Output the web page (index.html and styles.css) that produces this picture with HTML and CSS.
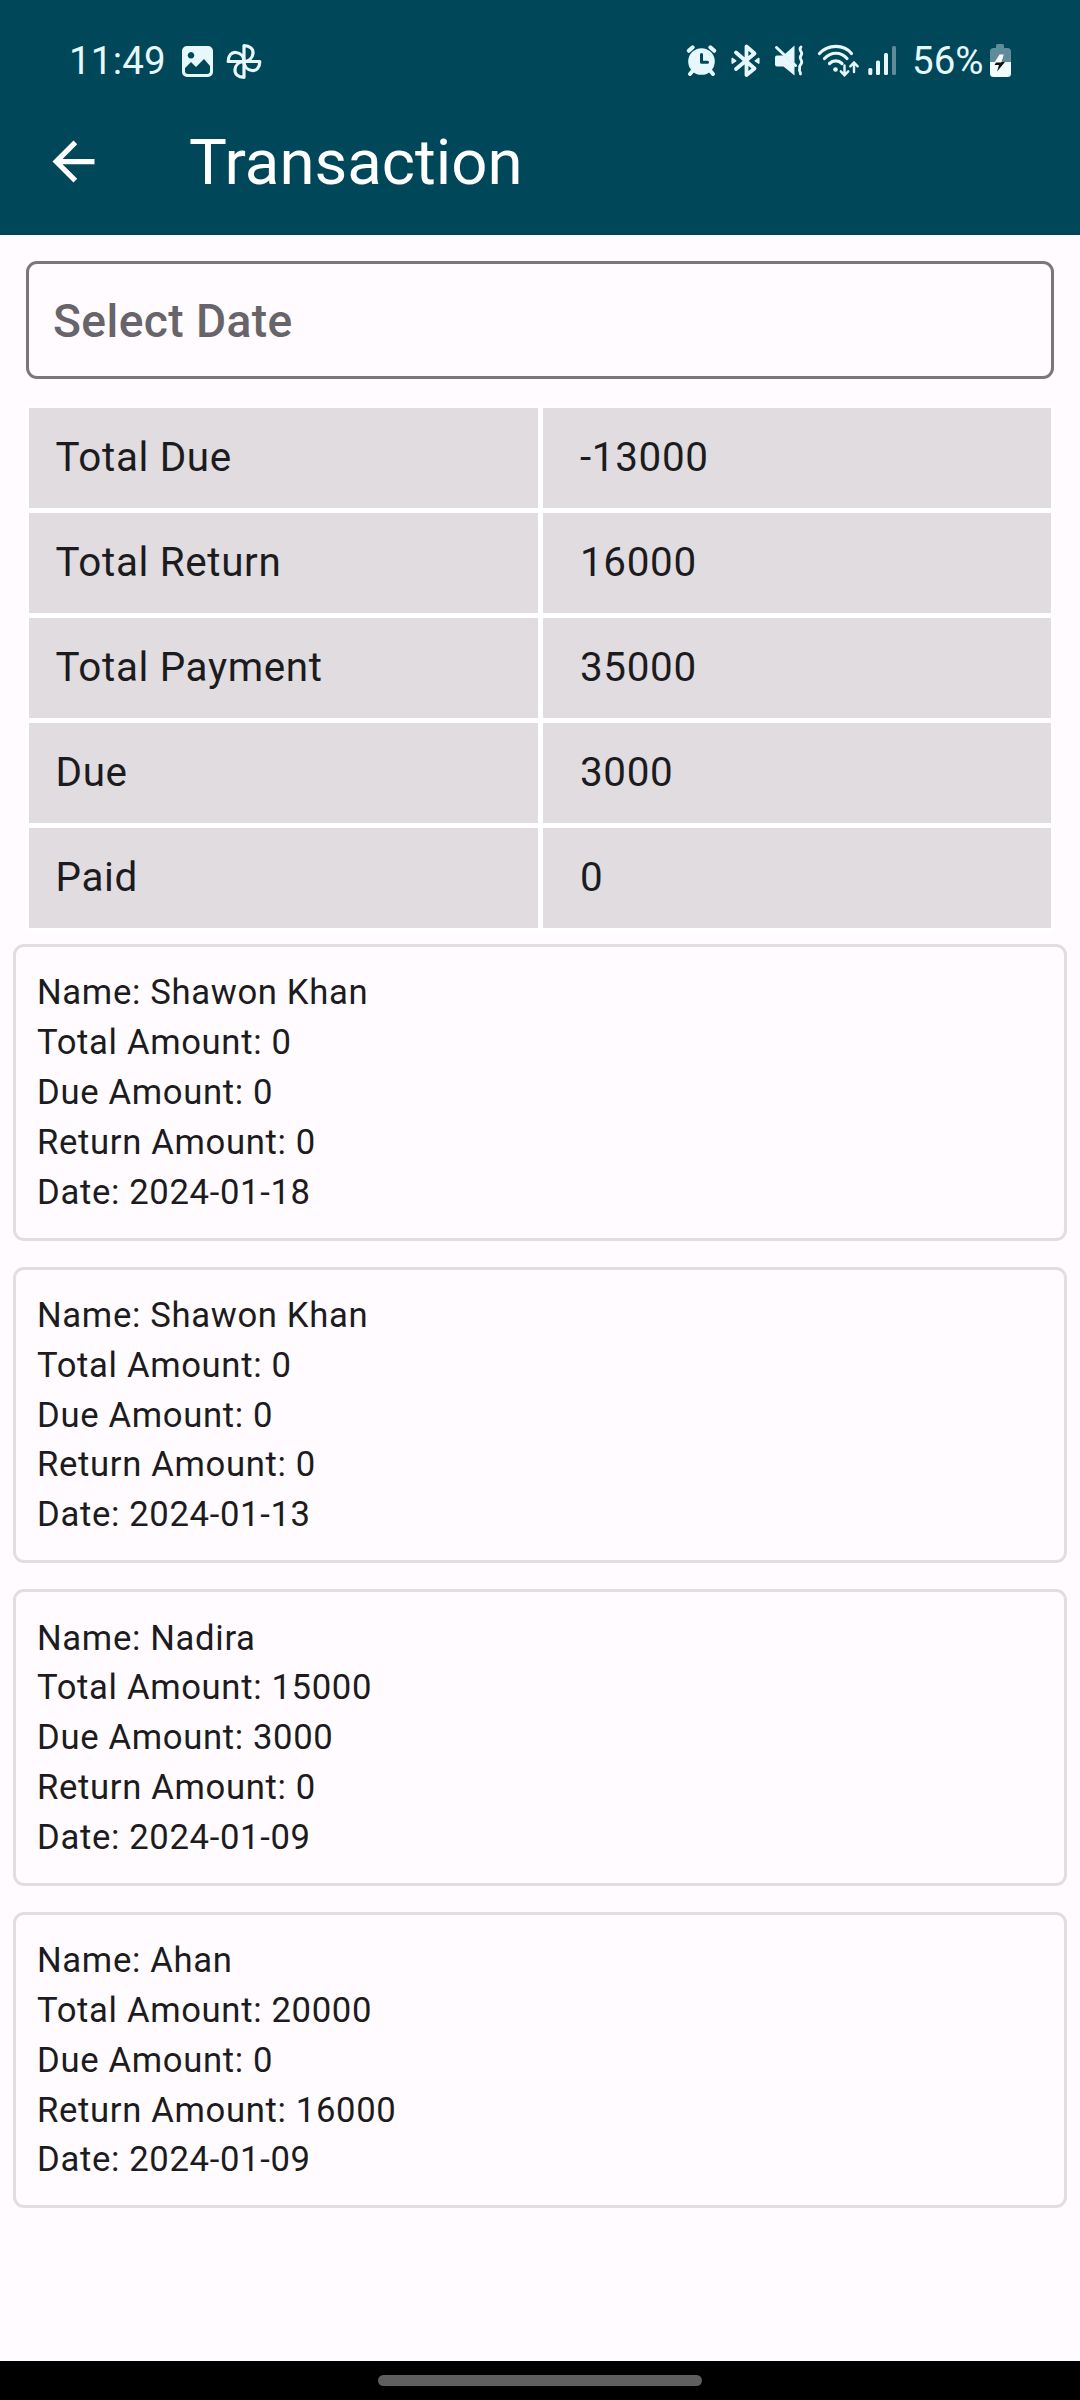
FILE: index.html
```html
<!DOCTYPE html>
<html lang="en">
<head>
    <meta charset="UTF-8">
    <title>Transaction</title>
    <link rel="stylesheet" href="styles.css">
</head>
<body>
<div id="screen">
    <header>
        <div class="status">
            <span class="time">11:49</span>
            <svg class="picture" width="34" height="36" viewBox="0 0 34 36">
                <path fill="#e6f8fc" fill-rule="evenodd" d="M6 3h21a5 5 0 0 1 5 5v21a5 5 0 0 1-5 5H6a5 5 0 0 1-5-5V8a5 5 0 0 1 5-5zM4 28a3 3 0 0 0 3 3h19a3 3 0 0 0 3-3v-5l-6-7-8 8-5-5-6 6zM10 9a3.300 3.300 0 1 0 .01 0z"/>
            </svg>
            <svg class="fan" width="38" height="36" viewBox="0 0 38 36">
                <g fill="none" stroke="#e6f8fc" stroke-width="3.200" stroke-linejoin="round">
                    <path d="M19 18.500V2.700C25 2.700 28.500 6 28 10.500C27.500 15 24 18.500 19 18.500"/>
                    <path d="M19 18.500V2.700C25 2.700 28.500 6 28 10.500C27.500 15 24 18.500 19 18.500" transform="rotate(90 19 18.500)"/>
                    <path d="M19 18.500V2.700C25 2.700 28.500 6 28 10.500C27.500 15 24 18.500 19 18.500" transform="rotate(180 19 18.500)"/>
                    <path d="M19 18.500V2.700C25 2.700 28.500 6 28 10.500C27.500 15 24 18.500 19 18.500" transform="rotate(270 19 18.500)"/>
                </g>
            </svg>
            <div class="right">
                <svg width="34" height="36" viewBox="0 0 34 36">
                    <circle cx="16.500" cy="18.500" r="13.300" fill="#e6f8fc"/>
                    <path d="M3.700 7.800l4-3.500M29.300 7.800l-4-3.500M7.500 28l-2.500 3M25.500 28l2.500 3" stroke="#e6f8fc" stroke-width="4" stroke-linecap="round"/>
                    <path d="M16.500 11.500v7.700h6" fill="none" stroke="#00475a" stroke-width="3" stroke-linecap="round" stroke-linejoin="round"/>
                </svg>
                <svg width="33" height="36" viewBox="0 0 33 36">
                    <path d="M7 9.500L25.500 25.500l-8 6.500V3.500L25.500 10.500 7 26" fill="none" stroke="#e6f8fc" stroke-width="3.800" stroke-linejoin="round" stroke-linecap="round"/>
                    <path d="M3.200 15.500l3.500 2.300-3.500 2.300zM29.800 15.500l-3.500 2.300 3.500 2.300z" fill="#e6f8fc" stroke="#e6f8fc" stroke-width="1.500" stroke-linejoin="round"/>
                </svg>
                <svg width="34" height="36" viewBox="0 0 34 36">
                    <path d="M3 14.500q0-2 2-2h6.500L22.500 23v9.500L11.500 23.500H5q-2 0-2-2zM13 11l9.500-8.500V20z" fill="#e6f8fc"/>
                    <path d="M4.500 4.500l19 18" stroke="#e6f8fc" stroke-width="3" stroke-linecap="round"/>
                    <path d="M29 4c-3.500 3.500 3 5 0 8.500s3 5 0 8.500-.5 4.500-1.500 5.500 1.500 2.500 1 4.500" fill="none" stroke="#e6f8fc" stroke-width="2.800" stroke-linecap="round"/>
                </svg>
                <svg width="44" height="36" viewBox="0 0 44 36">
                    <g fill="none" stroke="#e6f8fc" stroke-width="3.200" stroke-linecap="round">
                        <path d="M3.500 10.500C12 1 28 1 35.500 10.500"/>
                        <path d="M8.500 15.500C15 8.500 25 8.500 31 15.500"/>
                        <path d="M13.500 20.500C17 17 22.500 17 26 20.500"/>
                    </g>
                    <circle cx="19.500" cy="26.500" r="2.300" fill="#e6f8fc"/>
                    <path d="M28.500 22.500v9.500M24.800 28.300l3.700 3.900 3.700-3.900M38 29V19.800M34.300 23.300l3.700-3.900 3.700 3.900" fill="none" stroke="#e6f8fc" stroke-width="2.400" stroke-linecap="round"/>
                </svg>
                <svg class="signal" width="30" height="36" viewBox="0 0 30 36">
                    <g fill="#e6f8fc">
                        <rect x="1.300" y="25" width="4" height="7" rx="1.500"/>
                        <rect x="9" y="17.500" width="4" height="14.500" rx="1.500"/>
                        <rect x="17" y="10" width="4" height="22" rx="1.500"/>
                    </g>
                    <rect x="25" y="3" width="4" height="29" rx="1.500" fill="#5f8b9a"/>
                </svg>
                <span class="percent">56%</span>
                <svg class="battery" width="23" height="36" viewBox="0 0 23 36">
                    <path d="M7 5V2.500Q7 1 8.500 1h5Q15 1 15 2.500V5h3.500Q22 5 22 8.500V19H1V8.500Q1 5 4.500 5z" fill="#5f8b9a"/>
                    <path d="M1 19h21v11.500q0 3.500-3.500 3.500h-14Q1 34 1 30.500z" fill="#f4fbfd"/>
                    <path d="M10.500 11.500h4.300L12.500 19H5.800z" fill="#f4fbfd"/>
                    <path d="M12.500 19H16L8 28.500l2-6.500H5.500L7 19.500h5z" fill="#111"/>
                </svg>
            </div>
        </div>
        <div class="bar">
            <svg width="63" height="63" viewBox="0 0 24 24">
                <path fill="#fff" d="M20 11H7.830l5.590-5.590L12 4l-8 8 8 8 1.410-1.410L7.830 13H20v-2z"/>
            </svg>
            <h1>Transaction</h1>
        </div>
    </header>
    <main>
        <div class="date">Select Date</div>
        <div class="totals">
            <span>Total Due</span><span class="value">-13000</span>
            <span>Total Return</span><span class="value">16000</span>
            <span>Total Payment</span><span class="value">35000</span>
            <span>Due</span><span class="value">3000</span>
            <span>Paid</span><span class="value">0</span>
        </div>
        <ul class="list">
            <li>
                <p>Name: Shawon Khan</p>
                <p>Total Amount: 0</p>
                <p>Due Amount: 0</p>
                <p>Return Amount: 0</p>
                <p>Date: 2024-01-18</p>
            </li>
            <li>
                <p>Name: Shawon Khan</p>
                <p>Total Amount: 0</p>
                <p>Due Amount: 0</p>
                <p>Return Amount: 0</p>
                <p>Date: 2024-01-13</p>
            </li>
            <li>
                <p>Name: Nadira</p>
                <p>Total Amount: 15000</p>
                <p>Due Amount: 3000</p>
                <p>Return Amount: 0</p>
                <p>Date: 2024-01-09</p>
            </li>
            <li>
                <p>Name: Ahan</p>
                <p>Total Amount: 20000</p>
                <p>Due Amount: 0</p>
                <p>Return Amount: 16000</p>
                <p>Date: 2024-01-09</p>
            </li>
        </ul>
    </main>
    <footer><div class="pill"></div></footer>
</div>
</body>
</html>
```
FILE: styles.css
```css
*{
    margin: 0;
    padding: 0;
    box-sizing: border-box;
}
ul{
    list-style: none;
}
svg{
    display: block;
    flex: none;
}
body{
    font-family: Roboto, sans-serif;
    background: #fffbff;
    color: #1c1b1e;
}
#screen{
    width: 1080px;
    height: 2400px;
    display: flex;
    flex-direction: column;
    overflow: hidden;
}
header{
    height: 235px;
    background: #00475a;
}
.status{
    height: 122px;
    padding: 0 68px 0 69px;
    display: flex;
    align-items: center;
    color: #e6f8fc;
    font-size: 38.5px;
    line-height: 44px;
}
.time{
    width: 112px;
    letter-spacing: 0.2px;
}
.fan{
    margin-left: 10px;
}
.right{
    margin-left: auto;
    display: flex;
    align-items: center;
    gap: 10px;
}
.signal{
    margin-left: -3px;
}
.percent{
    width: 76px;
    margin-left: 5px;
    margin-right: -9px;
}
.bar{
    height: 79px;
    padding-left: 42px;
    display: flex;
    align-items: center;
}
.bar h1{
    margin-left: 84px;
    padding-top: 2px;
    font-size: 63.5px;
    font-weight: 400;
    line-height: 80px;
    color: #fff;
}
main{
    flex: 1;
    padding: 26px 13px 0;
}
.date{
    height: 118px;
    margin: 0 13px 26px;
    padding-left: 24px;
    border: 3px solid #7b767b;
    border-radius: 11px;
    font-size: 46.2px;
    font-weight: 500;
    line-height: 115px;
    letter-spacing: 0.4px;
    color: #68656a;
}
.totals{
    margin: 0 13px;
    padding: 3px;
    display: grid;
    grid-template-columns: 1fr 1fr;
    gap: 5px;
    background: #fff;
    font-size: 40.4px;
    letter-spacing: 0.66px;
}
.totals span{
    height: 100px;
    padding-left: 26.5px;
    line-height: 99px;
    background: #e0dce0;
}
.totals .value{
    padding-left: 37.5px;
}
.list{
    padding-top: 13px;
}
.list li{
    height: 296.6px;
    margin-bottom: 26px;
    padding: 21.4px 21px;
    border: 3px solid #e2dde2;
    border-radius: 11px;
    font-size: 34.65px;
    line-height: 49.8px;
    letter-spacing: 0.66px;
}
footer{
    height: 39px;
    padding-top: 14px;
    background: #000;
}
.pill{
    width: 324px;
    height: 11px;
    margin: 0 auto;
    border-radius: 6px;
    background: #5f5f5f;
}
```
